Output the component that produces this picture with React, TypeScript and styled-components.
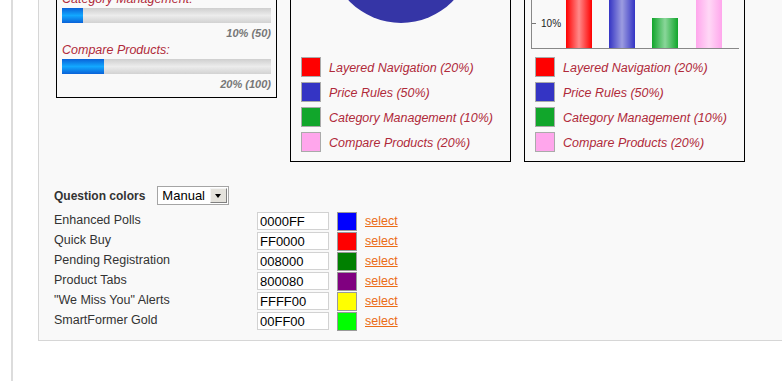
import React from 'react';
import styled, { createGlobalStyle } from 'styled-components';

const GlobalStyle = createGlobalStyle`
    html, body {
        margin: 0;
        padding: 0;
        background: #fff;
        overflow: hidden;
    }
    body {
        font-family: "Liberation Sans", Arial, sans-serif;
        font-size: 12.5px;
        color: #333;
    }
`

const features = [
    { label: 'Layered Navigation', pct: 20, votes: 100, color: '#ff0000', light: '#ff8a8a' },
    { label: 'Price Rules', pct: 50, votes: 250, color: '#3434c4', light: '#9c9ce0' },
    { label: 'Category Management', pct: 10, votes: 50, color: '#11a62b', light: '#8ad69a' },
    { label: 'Compare Products', pct: 20, votes: 100, color: '#ffa6ec', light: '#ffd8f6' },
]

const questions = [
    { label: 'Enhanced Polls', hex: '0000FF' },
    { label: 'Quick Buy', hex: 'FF0000' },
    { label: 'Pending Registration', hex: '008000' },
    { label: 'Product Tabs', hex: '800080' },
    { label: '"We Miss You" Alerts', hex: 'FFFF00' },
    { label: 'SmartFormer Gold', hex: '00FF00' },
]

// pie slice path, angles in degrees, 0 = 3 o'clock, clockwise
const slice = (cx: number, cy: number, r: number, a0: number, a1: number) => {
    const rad = (a: number) => (a * Math.PI) / 180
    const x0 = cx + r * Math.cos(rad(a0))
    const y0 = cy + r * Math.sin(rad(a0))
    const x1 = cx + r * Math.cos(rad(a1))
    const y1 = cy + r * Math.sin(rad(a1))
    const large = a1 - a0 > 180 ? 1 : 0
    return `M${cx},${cy} L${x0},${y0} A${r},${r} 0 ${large} 1 ${x1},${y1} Z`
}

function PieChart() {
    // blue half sits at the bottom
    const order = [1, 0, 3, 2]
    let angle = 0
    return (
        <svg width="152" height="152" viewBox="0 0 152 152">
            {order.map(i => {
                const f = features[i]
                const a0 = angle
                angle += f.pct * 3.6
                const fill = i === 1 ? '#3535a6' : f.color
                return <path key={f.label} d={slice(76, 80, 72, a0, angle)} fill={fill} />
            })}
        </svg>
    )
}

function BarChart() {
    const ticks = [1, 2, 3, 4, 5]
    const xs = [41, 84, 127, 171]
    const tickY = (t: number) => 152 - (t - 1) * 30
    return (
        <svg width="219" height="181" viewBox="0 0 219 181">
            <defs>
                {features.map((f, i) => (
                    <linearGradient key={i} id={`bar${i}`} x1="0" x2="1" y1="0" y2="0">
                        <stop offset="0" stopColor={f.color} />
                        <stop offset="0.5" stopColor={f.light} />
                        <stop offset="1" stopColor={f.color} />
                    </linearGradient>
                ))}
            </defs>
            {ticks.map(t => (
                <g key={t}>
                    <line x1="6" x2="11" y1={tickY(t) + 0.5} y2={tickY(t) + 0.5} stroke="#777" />
                    <text x="16" y={tickY(t) + 4} fontSize="10" fill="#222" fontFamily="Liberation Sans, Arial, sans-serif">{t * 10}%</text>
                </g>
            ))}
            {features.map((f, i) => (
                <rect key={f.label} x={xs[i]} width="26" y={177 - f.pct * 3} height={f.pct * 3} fill={`url(#bar${i})`} />
            ))}
            <line x1="6.5" x2="6.5" y1="20" y2="178" stroke="#888" />
            <line x1="6" x2="214" y1="177.5" y2="177.5" stroke="#888" />
        </svg>
    )
}

function Legend() {
    return (
        <LegendList>
            {features.map(f => (
                <LegendRow key={f.label}>
                    <Swatch color={f.color} />
                    <LegendText>{f.label} ({f.pct}%)</LegendText>
                </LegendRow>
            ))}
        </LegendList>
    )
}

export default function App() {
    return (
        <>
            <GlobalStyle />
            <Main>
                <Panel>
                    <ChartRow>
                        <StatsBox>
                            {features.map(f => (
                                <StatItem key={f.label}>
                                    <StatLabel>{f.label}:</StatLabel>
                                    <Track>
                                        <Fill style={{ width: `${f.pct}%` }} />
                                    </Track>
                                    <StatValue>{f.pct}% ({f.votes})</StatValue>
                                </StatItem>
                            ))}
                        </StatsBox>
                        <ChartBox>
                            <ChartArea>
                                <PieChart />
                            </ChartArea>
                            <Legend />
                        </ChartBox>
                        <ChartBox>
                            <ChartArea>
                                <BarChart />
                            </ChartArea>
                            <Legend />
                        </ChartBox>
                    </ChartRow>

                    <ColorsHeader>
                        <HeaderLabel>Question colors</HeaderLabel>
                        <FakeSelect>
                            <span>Manual</span>
                            <SelectButton />
                        </FakeSelect>
                    </ColorsHeader>
                    {questions.map(q => (
                        <ColorRow key={q.label}>
                            <RowLabel>{q.label}</RowLabel>
                            <HexInput type="text" defaultValue={q.hex} />
                            <ColorChip color={`#${q.hex}`} />
                            <SelectLink href="#">select</SelectLink>
                        </ColorRow>
                    ))}
                </Panel>
            </Main>
        </>
    )
}

// page is scrolled down: the top of the panel lies above the window
const Main = styled.div`
    margin: -160px 0 0 11px;
    border-left: 2px solid #dcdcdc;
    padding: 0 0 40px 25px;
`

const Panel = styled.div`
    width: 780px;
    background: #f9f9f9;
    border: 1px solid #d6d6d6;
    padding: 19px 15px 9px;
`

const ChartRow = styled.div`
    display: flex;
    align-items: flex-start;
    gap: 13px;
    margin-left: 2px;
`

const Box = styled.div`
    box-sizing: border-box;
    width: 221px;
    border: 1px solid #000;
`

const StatsBox = styled(Box)`
    padding: 29px 5px 6px;
`

const StatItem = styled.div`
    & + & {
        margin-top: 3px;
    }
`

const StatLabel = styled.div`
    font-style: italic;
    font-size: 12.5px;
    line-height: 17px;
    margin-top: -1px;
    color: #b02a3a;
`

const Track = styled.div`
    height: 15px;
    background: linear-gradient(to bottom, #cfcfcf, #ececec 50%, #d2d2d2);
`

const Fill = styled.div`
    height: 100%;
    background: linear-gradient(to bottom, #0a62d8, #12a8ff 50%, #0a62d8);
`

const StatValue = styled.div`
    margin-top: 3px;
    text-align: right;
    font-size: 11px;
    line-height: 14px;
    font-weight: bold;
    font-style: italic;
    color: #777;
`

const ChartBox = styled(Box)`
    padding: 10px 0 9px;
`

const ChartArea = styled.div`
    height: 181px;
    display: flex;
    justify-content: center;
`

const LegendList = styled.div`
    margin-top: 5px;
    padding-left: 10px;
    display: flex;
    flex-direction: column;
    gap: 5px;
`

const LegendRow = styled.div`
    display: flex;
    align-items: center;
    gap: 8px;
    height: 20px;
`

const Swatch = styled.div<{ color: string }>`
    box-sizing: border-box;
    width: 20px;
    height: 20px;
    background: ${p => p.color};
    border: 1px solid #aaa;
`

const LegendText = styled.span`
    font-style: italic;
    font-size: 12.5px;
    line-height: 20px;
    padding-top: 1px;
    color: #b02a3a;
`

const ColorsHeader = styled.div`
    display: flex;
    align-items: center;
    gap: 12px;
    height: 19px;
    margin: 24px 0 6px;
`

const HeaderLabel = styled.span`
    font-weight: bold;
    font-size: 12px;
    color: #333;
`

const FakeSelect = styled.div`
    box-sizing: border-box;
    width: 72px;
    height: 19px;
    border: 1px solid #a5a5a5;
    background: #fff;
    display: flex;
    align-items: center;
    justify-content: space-between;
    padding: 0 1px 0 4px;
    font-size: 13px;
    color: #000;
`

const SelectButton = styled.div`
    box-sizing: border-box;
    width: 17px;
    height: 15px;
    background: #e4e2dc;
    border: 1px solid;
    border-color: #f4f4f4 #808080 #808080 #f4f4f4;
    position: relative;
    &::after {
        content: '';
        position: absolute;
        left: 4px;
        top: 5px;
        border-left: 3.5px solid transparent;
        border-right: 3.5px solid transparent;
        border-top: 4px solid #000;
    }
`

const ColorRow = styled.div`
    display: grid;
    grid-template-columns: 195px 72px 20px auto;
    column-gap: 8px;
    align-items: center;
    height: 20px;
`

const RowLabel = styled.span`
    font-size: 12.5px;
    line-height: 18px;
    margin-top: -2px;
    color: #333;
`

const HexInput = styled.input`
    box-sizing: border-box;
    width: 72px;
    height: 18px;
    margin: 0;
    padding: 0 2px;
    border: 1px solid #d2d2d2;
    background: #fff;
    font-family: "Liberation Sans", Arial, sans-serif;
    font-size: 13px;
    color: #000;
    outline: none;
`

const ColorChip = styled.div<{ color: string }>`
    box-sizing: border-box;
    width: 20px;
    height: 19px;
    background: ${p => p.color};
    border: 1px solid #9a9a9a;
`

const SelectLink = styled.a`
    font-size: 12.5px;
    color: #ea6c16;
    text-decoration: underline;
`
